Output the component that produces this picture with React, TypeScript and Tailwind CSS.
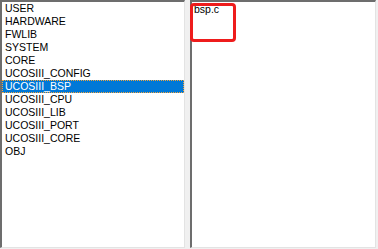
const folders = [
  "USER",
  "HARDWARE",
  "FWLIB",
  "SYSTEM",
  "CORE",
  "UCOSIII_CONFIG",
  "UCOSIII_BSP",
  "UCOSIII_CPU",
  "UCOSIII_LIB",
  "UCOSIII_PORT",
  "UCOSIII_CORE",
  "OBJ",
];

const App = () => {
  const selected = "UCOSIII_BSP";

  return (
    <div
      className="w-[378px] h-[249px] bg-[#f0f0f0] flex gap-[5px] text-[10.5px] text-black leading-[13px]"
      style={{ fontFamily: '"Liberation Sans", Arial, sans-serif' }}
    >
      <div className="w-[185px] h-[248px] bg-white border-l-2 border-t-2 border-l-[#6d6d6d] border-t-[#6d6d6d] border-r border-b border-r-[#e3e3e3] border-b-[#e3e3e3] pt-0 flex flex-col">
        {folders.map((name) =>
          name === selected ? (
            <div
              key={name}
              className="h-[13px] bg-[#0078d7] text-white pl-[2px] border border-dotted border-[#f3a53c] leading-[11px]"
            >
              {name}
            </div>
          ) : (
            <div key={name} className="h-[13px] pl-[3px]">
              {name}
            </div>
          )
        )}
      </div>
      <div className="relative w-[186px] h-[248px] bg-white border-l-2 border-t-2 border-l-[#6d6d6d] border-t-[#6d6d6d] border-r border-b border-r-[#e3e3e3] border-b-[#e3e3e3] flex flex-col">
        <div className="h-[13px] pl-[2px] pt-[1px]">bsp.c</div>
        <div className="absolute left-[-2px] top-[1px] w-[46px] h-[39px] border-[3px] border-[#ee1c1c] rounded-[4px]" />
      </div>
    </div>
  );
};

export default App;
